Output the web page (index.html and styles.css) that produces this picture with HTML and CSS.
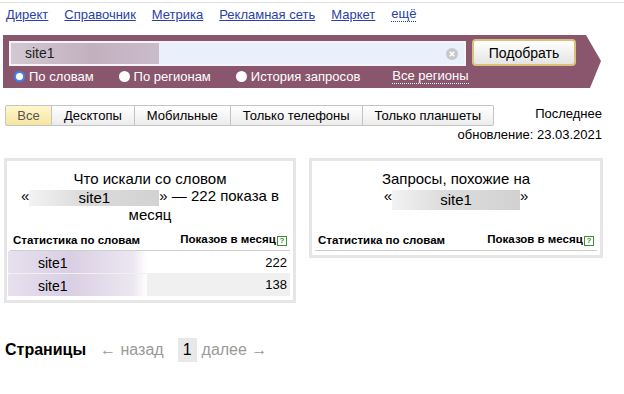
FILE: index.html
```html
<!DOCTYPE html>
<html lang="ru">
<head>
  <meta charset="UTF-8" />
  <title>Подбор слов</title>
  <link rel="stylesheet" href="styles.css">
</head>
<body>

  <div class="topline"></div>
  <nav class="services">
    <a href="#">Директ</a>
    <a href="#">Справочник</a>
    <a href="#">Метрика</a>
    <a href="#">Рекламная сеть</a>
    <a href="#">Маркет</a>
    <a href="#" class="more">ещё</a>
  </nav>

  <!-- search bar -->
  <div class="search-bar">
    <div class="search-row">
      <div class="search-input">
        <span class="blur-word">site1</span>
        <span class="clear">
          <svg width="12" height="12" viewBox="0 0 12 12">
            <circle cx="6" cy="6" r="6" fill="#c8c8c8"/>
            <path d="M3.8 3.8 L8.2 8.2 M8.2 3.8 L3.8 8.2" stroke="#fff" stroke-width="1.6"/>
          </svg>
        </span>
      </div>
      <button class="submit">Подобрать</button>
    </div>
    <div class="modes">
      <label class="mode active"><span class="radio"></span>По словам</label>
      <label class="mode"><span class="radio"></span>По регионам</label>
      <label class="mode"><span class="radio"></span>История запросов</label>
      <a href="#" class="regions">Все регионы</a>
    </div>
  </div>

  <div class="filters">
    <div class="tabs">
      <button class="tab selected">Все</button>
      <button class="tab">Десктопы</button>
      <button class="tab">Мобильные</button>
      <button class="tab">Только телефоны</button>
      <button class="tab">Только планшеты</button>
    </div>
    <div class="updated">Последнее</div>
    <div class="updated date">обновление: 23.03.2021</div>
  </div>

  <div class="cards">
    <div class="card">
      <div class="card-title">
        Что искали со словом<br>
        «<span class="blur-gray">site1</span>» — 222 показа в<br>
        месяц
      </div>
      <table class="stats">
        <tr>
          <th>Статистика по словам</th>
          <th class="num">Показов в месяц <span class="help">?</span></th>
        </tr>
        <tr>
          <td><span class="phrase">site1</span></td>
          <td class="num">222</td>
        </tr>
        <tr class="odd">
          <td><span class="phrase">site1</span></td>
          <td class="num">138</td>
        </tr>
      </table>
    </div>

    <div class="card similar">
      <div class="card-title">
        Запросы, похожие на<br>
        «<span class="blur-gray wide">site1</span>»
      </div>
      <table class="stats">
        <tr>
          <th>Статистика по словам</th>
          <th class="num">Показов в месяц <span class="help">?</span></th>
        </tr>
      </table>
    </div>
  </div>

  <div class="pager">
    <strong>Страницы</strong>
    <span class="dim">← назад</span>
    <span class="current">1</span>
    <span class="dim">далее →</span>
  </div>

</body>
</html>
```

FILE: styles.css
```css
body {
  margin: 0;
  font-family: "Liberation Sans", Arial, sans-serif;
  font-size: 13px;
  color: #000;
  background: #fff;
}

.topline {
  margin-top: 2px;
  border-top: 1px solid #e0e0e0;
}

.services {
  display: flex;
  gap: 16px;
  padding: 4px 0 0 6px;
  height: 28px;
}

.services a {
  color: #2a3fa8;
  text-decoration: underline;
}

.services a.more {
  text-decoration: none;
  border-bottom: 1px dotted #2a3fa8;
  align-self: flex-start;
  line-height: 14px;
}

/* search bar */
.search-bar {
  margin-left: 3px;
  width: 598px;
  height: 53px;
  background: #8a566d;
  clip-path: polygon(0 0, 583px 0, 598px 26px, 587px 53px, 0 53px);
  box-sizing: border-box;
  padding: 4px 0 0 6px;
}

.search-row {
  display: flex;
  align-items: center;
  gap: 6px;
}

.search-input {
  width: 453px;
  height: 21px;
  border: 2px solid #f4f4f8;
  background: #e9effb;
  display: flex;
  align-items: center;
  justify-content: space-between;
  margin-top: 2px;
}

.blur-word {
  width: 134px;
  height: 21px;
  line-height: 21px;
  padding-left: 14px;
  font-size: 14px;
  color: #222;
  background: linear-gradient(90deg, #d3c8d1 0%, #c2b0bf 55%, #cbbccb 100%);
}

.clear {
  display: flex;
  margin-right: 6px;
}

.submit {
  width: 104px;
  height: 27px;
  font-family: inherit;
  font-size: 14px;
  color: #000;
  border: 2px solid #d8c27a;
  border-radius: 4px;
  background: linear-gradient(#ffffff, #e4e4e4);
  padding: 0;
}

.modes {
  display: flex;
  align-items: center;
  height: 20px;
  color: #fff;
}

.mode {
  display: flex;
  align-items: center;
  margin-right: 20px;
}

.mode .radio {
  width: 11px;
  height: 11px;
  border-radius: 50%;
  background: #fff;
  margin: 0 4px 0 5px;
}

.mode.active .radio {
  width: 7px;
  height: 7px;
  border: 2px solid #3d84f0;
}

.regions {
  color: #fff;
  text-decoration: none;
  border-bottom: 1px dotted #fff;
  margin-left: 12px;
  line-height: 14px;
}

/* device tabs */
.filters {
  display: grid;
  grid-template-columns: auto 1fr;
  grid-template-rows: 21px 21px;
  height: 70px;
  box-sizing: border-box;
  padding: 15px 22px 0 5px;
}

.tabs {
  display: flex;
  height: 21px;
  margin-top: 2px;
}

.tab {
  font-family: inherit;
  font-size: 13px;
  color: #000;
  height: 21px;
  padding: 0 12px;
  white-space: nowrap;
  border: 1px solid #c4c4c4;
  border-left: none;
  background: linear-gradient(#ffffff, #ececec);
}

.tab:first-child {
  border-left: 1px solid #c4c4c4;
  border-radius: 2px 0 0 2px;
}

.tab:last-child {
  border-radius: 0 2px 2px 0;
}

.tab.selected {
  background: linear-gradient(#fff6cc, #f6e6a2);
  color: #555;
  width: 47px;
  padding: 0;
}

.updated {
  text-align: right;
  line-height: 21px;
  white-space: nowrap;
}

.updated.date {
  grid-column: 1 / 3;
}

/* cards */
.cards {
  display: flex;
  align-items: flex-start;
  gap: 13px;
  padding-left: 4px;
}

.card {
  width: 286px;
  border: 3px solid #e6e6e6;
  background: #fff;
  padding-bottom: 4px;
}

.card.similar {
  width: 288px;
  padding-bottom: 4px;
}

.card-title {
  text-align: center;
  font-size: 15px;
  line-height: 17px;
  padding: 9px 6px 0;
  min-height: 51px;
}

.blur-gray {
  display: inline-block;
  width: 130px;
  height: 16px;
  line-height: 16px;
  vertical-align: -2px;
  background: linear-gradient(90deg, #f3f3f3 0%, #dcdcdc 40%, #d2d2d2 100%);
}

.blur-gray.wide {
  width: 128px;
  height: 20px;
  line-height: 20px;
  vertical-align: -4px;
}

.stats {
  border-collapse: collapse;
  width: calc(100% - 6px);
  margin: 8px 3px 0;
}

.similar .stats {
  margin-top: 10px;
}

.stats th {
  font-size: 11.5px;
  font-weight: bold;
  text-align: left;
  padding: 2px 3px 4px;
  border-bottom: 1px solid #cfcfcf;
  white-space: nowrap;
}

.stats .num {
  text-align: right;
}

.stats td {
  height: 22px;
  padding: 0 3px;
  font-size: 13px;
}

.stats tr.odd td {
  height: 23px;
  background: #f0f0f0;
}

.phrase {
  display: inline-block;
  width: 109px;
  padding-left: 30px;
  margin-left: -5px;
  height: 22px;
  line-height: 24px;
  font-size: 14px;
  background: linear-gradient(90deg, #e7e0ee 0%, #d9cfe3 45%, #ece7f1 90%, #fff 100%);
}

.help {
  display: inline-block;
  width: 8px;
  height: 8px;
  line-height: 8px;
  font-size: 8px;
  color: #3a8f2a;
  border: 1px solid #3a8f2a;
  text-align: center;
  vertical-align: 0;
  margin-left: -2px;
}

/* pager */
.pager {
  display: flex;
  align-items: center;
  gap: 14px;
  padding: 35px 0 0 5px;
  font-size: 16px;
}

.pager .dim {
  color: #999;
}

.pager .current {
  background: #e8e8e8;
  padding: 3px 5px;
  margin-right: -9px;
}
```
